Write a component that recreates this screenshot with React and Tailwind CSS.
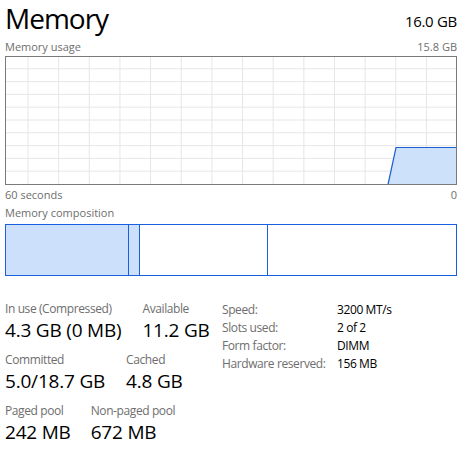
const font = { fontFamily: '"Segoe UI", "Open Sans", "Noto Sans", sans-serif' };

const vLines = Array.from({ length: 14 }, (_, i) => 23 + i * 30.65);
const hLines = Array.from({ length: 9 }, (_, i) => (i + 1) * 12.8);

const UsageChart = () => (
  <svg width="452" height="129" className="block">
    {vLines.map((x, i) => (
      <line key={"v" + i} x1={x} y1="0" x2={x} y2="129" stroke="#e6e6e6" strokeWidth="1" />
    ))}
    {hLines.map((y, i) => (
      <line key={"h" + i} x1="0" y1={y} x2="452" y2={y} stroke="#e6e6e6" strokeWidth="1" />
    ))}
    <polygon points="383,128.5 391,91.5 451.5,91.5 451.5,128.5" fill="#c9defa" fillOpacity="0.9" />
    <polyline points="383,128.5 391,91.5 451.5,91.5" fill="none" stroke="#1a5fcc" strokeWidth="1.2" />
    <rect x="0.5" y="0.5" width="451" height="128" fill="none" stroke="#7a7a7a" strokeWidth="1" />
  </svg>
);

const Stat = ({ label, value }) => (
  <div className="flex flex-col">
    <span className="text-[12px] leading-[16px] tracking-[-0.4px] text-[#6e6e6e]">{label}</span>
    <span className="text-[19px] leading-[26px] tracking-[-0.2px] text-black">{value}</span>
  </div>
);

const details = [
  ["Speed:", "3200 MT/s"],
  ["Slots used:", "2 of 2"],
  ["Form factor:", "DIMM"],
  ["Hardware reserved:", "156 MB"],
];

export default function App() {
  return (
    <div className="w-[466px] h-[457px] bg-white overflow-hidden pl-[5px] pr-[9px]" style={font}>
      {/* header */}
      <div className="flex items-end justify-between h-[37px]">
        <span className="text-[28px] leading-[38px] tracking-[-1px] text-black">Memory</span>
        <span className="text-[15px] leading-[22px] tracking-[-0.3px] text-black mb-[5px]">16.0 GB</span>
      </div>

      <div className="flex justify-between text-[11px] leading-[16px] text-[#6e6e6e] mt-[2px]">
        <span>Memory usage</span>
        <span>15.8 GB</span>
      </div>

      {/* usage graph */}
      <div className="mt-[1px]">
        <UsageChart />
      </div>

      <div className="flex justify-between text-[11px] leading-[16px] text-[#6e6e6e] mt-[2px]">
        <span>60 seconds</span>
        <span>0</span>
      </div>

      <div className="text-[11px] leading-[16px] text-[#6e6e6e] mt-[2px]">Memory composition</div>

      {/* composition bar */}
      <div className="flex h-[52px] border border-[#1a5fe0] mt-[3px]">
        <div className="w-[123px] bg-[#cce0fc] border-r border-[#1a5fe0]" />
        <div className="w-[11px] bg-[#cce0fc] border-r border-[#1a5fe0]" />
        <div className="w-[128px] border-r border-[#1a5fe0]" />
        <div className="flex-1" />
      </div>

      {/* stats */}
      <div className="flex mt-[25px]">
        <div className="w-[217px] flex flex-col gap-[9px]">
          <div className="flex gap-[21px]">
            <Stat label="In use (Compressed)" value="4.3 GB (0 MB)" />
            <Stat label="Available" value="11.2 GB" />
          </div>
          <div className="flex gap-[21px]">
            <Stat label="Committed" value="5.0/18.7 GB" />
            <Stat label="Cached" value="4.8 GB" />
          </div>
          <div className="flex gap-[20px]">
            <Stat label="Paged pool" value="242 MB" />
            <Stat label="Non-paged pool" value="672 MB" />
          </div>
        </div>
        <div className="flex flex-col">
          {details.map(([k, v]) => (
            <div key={k} className="flex text-[12px] leading-[18px] tracking-[-0.4px]">
              <span className="w-[115px] text-[#6e6e6e]">{k}</span>
              <span className="text-black">{v}</span>
            </div>
          ))}
        </div>
      </div>
    </div>
  );
}
